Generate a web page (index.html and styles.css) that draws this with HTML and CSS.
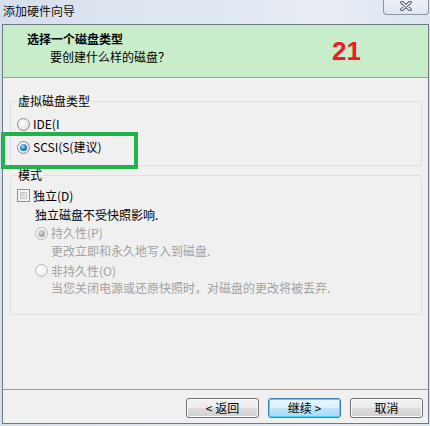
FILE: index.html
```html
<!DOCTYPE html>
<html lang="zh-CN">
<head>
<meta charset="utf-8">
<title>添加硬件向导</title>
<link rel="stylesheet" href="styles.css">
</head>
<body>
<div class="window">
  <div class="titlebar">
    <span class="title-text">添加硬件向导</span>
    <div class="close-btn">
      <svg width="12" height="10" viewBox="0 0 12 10">
        <path d="M2 1.5 L10 8.5 M10 1.5 L2 8.5" stroke="#4b5462" stroke-width="3.6" stroke-linecap="round" fill="none"/>
        <path d="M2 1.5 L10 8.5 M10 1.5 L2 8.5" stroke="#ffffff" stroke-width="1.6" stroke-linecap="round" fill="none"/>
      </svg>
    </div>
  </div>
  <div class="client">
    <div class="header">
      <div class="header-text">
        <div class="header-title">选择一个磁盘类型</div>
        <div class="header-sub">要创建什么样的磁盘？</div>
      </div>
      <div class="badge">21</div>
    </div>
    <div class="body">
      <fieldset class="group group-type">
        <legend class="legend">虚拟磁盘类型</legend>
        <div class="row"><span class="radio"></span><span class="label">IDE(I</span></div>
        <div class="row row-gap"><span class="radio checked"></span><span class="label">SCSI(S(建议)</span></div>
      </fieldset>
      <fieldset class="group group-mode">
        <legend class="legend">模式</legend>
        <div class="row row-check"><span class="checkbox"></span><span class="label">独立(D)</span></div>
        <div class="desc desc-main">独立磁盘不受快照影响.</div>
        <div class="row row-sub"><span class="radio disabled checked-disabled"></span><span class="label muted">持久性(P)</span></div>
        <div class="desc desc-sub muted">更改立即和永久地写入到磁盘.</div>
        <div class="row row-sub row-sub2"><span class="radio disabled"></span><span class="label muted">非持久性(O)</span></div>
        <div class="desc desc-sub muted">当您关闭电源或还原快照时，对磁盘的更改将被丢弃.</div>
      </fieldset>
    </div>
    <div class="footer">
      <button class="btn">&lt; 返回</button>
      <button class="btn btn-default">继续 &gt;</button>
      <button class="btn">取消</button>
    </div>
  </div>
  <div class="highlight"></div>
</div>
</body>
</html>
```
FILE: styles.css
```css
* { box-sizing: border-box; }
html, body {
  margin: 0;
  padding: 0;
  width: 430px;
  height: 426px;
  overflow: hidden;
}
body {
  font-family: "Noto Sans CJK SC", "Liberation Sans", sans-serif;
  font-size: 12px;
  color: #000;
  background: #dce5ef;
}
.window {
  position: relative;
  width: 430px;
  height: 426px;
  background: linear-gradient(to right, #d6e0ec 0%, #e2e9f2 55%, #e9eef5 75%, #dde5ef 100%);
}
.titlebar {
  height: 24px;
  display: flex;
  justify-content: space-between;
  align-items: flex-start;
}
.title-text {
  padding: 2px 0 0 3px;
  line-height: 18px;
  font-size: 12px;
  color: #111;
}
.close-btn {
  width: 46px;
  height: 16px;
  margin-top: -1px;
  margin-right: 1px;
  border: 1px solid #8c97a6;
  border-top: none;
  border-radius: 0 0 4px 4px;
  background: linear-gradient(#eef2f7, #dfe6ee);
  display: flex;
  align-items: center;
  justify-content: center;
  padding-bottom: 1px;
}
.client {
  margin-left: 2px;
  width: 427px;
  height: 400px;
  border: 1px solid #6f7884;
  background: #f0f0f0;
  display: flex;
  flex-direction: column;
}
.header {
  height: 53px;
  flex: none;
  background: #c7edcb;
  border-bottom: 1px solid #a0a0a0;
  display: flex;
}
.header-text {
  flex: 1;
  padding: 5px 0 0 24px;
  line-height: 17px;
}
.header-title {
  font-weight: bold;
}
.header-sub {
  padding-left: 23px;
  margin-top: 1px;
}
.badge {
  align-self: flex-start;
  margin-top: 13px;
  margin-right: 67px;
  font-family: "Liberation Sans", sans-serif;
  font-weight: bold;
  font-size: 26px;
  line-height: 26px;
  color: #ed1c24;
}
.body {
  flex: 1;
  padding: 15px 6px 0 7px;
}
.group {
  margin: 0;
  padding: 0 6px;
  border: 1px solid #d5dfe5;
  border-radius: 3px;
  min-width: 0;
}
.legend {
  padding: 0 1px;
  line-height: 16px;
}
.group-type {
  padding-top: 6px;
  padding-bottom: 9px;
}
.group-mode {
  margin-top: 1px;
  padding-top: 3px;
  padding-bottom: 17px;
}
.row {
  display: flex;
  align-items: center;
  height: 18px;
}
.row-gap { margin-top: 5px; }
.row-check { height: 19px; }
.label {
  margin-left: 3px;
  line-height: 16px;
}
.desc {
  line-height: 18px;
}
.desc-main {
  height: 19px;
  line-height: 19px;
  padding-left: 18px;
}
.row-sub {
  padding-left: 18px;
}
.row-sub .label { margin-left: 3px; }
.row-sub2 {
  margin-top: 2px;
  height: 17px;
}
.desc-sub {
  padding-left: 34px;
  height: 18px;
}
.muted { color: #a2a2a2; }
.radio {
  width: 13px;
  height: 13px;
  flex: none;
  border-radius: 50%;
  border: 1px solid #8d8f91;
  background: radial-gradient(circle at 40% 35%, #ffffff 0%, #f0f0f0 40%, #d4d4d4 100%);
  display: flex;
  align-items: center;
  justify-content: center;
}
.radio.checked::after {
  content: "";
  width: 7px;
  height: 7px;
  border-radius: 50%;
  background: radial-gradient(circle at 40% 35%, #a6e3fb 0%, #2b8ad0 45%, #0d3f73 100%);
}
.radio.disabled {
  border-color: #b8b8b8;
  background: radial-gradient(circle at 40% 35%, #ffffff 0%, #f4f4f4 50%, #e2e2e2 100%);
}
.radio.checked-disabled::after {
  content: "";
  width: 7px;
  height: 7px;
  border-radius: 50%;
  background: radial-gradient(circle at 40% 35%, #dcdcdc 0%, #a8a8a8 60%, #8f8f8f 100%);
}
.checkbox {
  width: 13px;
  height: 13px;
  flex: none;
  border: 1px solid #8e8f8f;
  background: #f4f4f4;
  padding: 2px;
  display: flex;
}
.checkbox::after {
  content: "";
  flex: 1;
  border: 1px solid #c8c8c8;
  background: linear-gradient(135deg, #cfcfcf, #f2f2f2);
}
.footer {
  flex: none;
  height: 34px;
  border-top: 1px solid #a0a0a0;
  padding: 8px 5px 0 0;
  display: flex;
  justify-content: flex-end;
  align-items: flex-start;
  gap: 9px;
}
.btn {
  width: 73px;
  height: 20px;
  padding: 0;
  font-family: "Noto Sans CJK SC", "Liberation Sans", sans-serif;
  font-size: 12px;
  line-height: 16px;
  color: #000;
  border: 1px solid #707070;
  border-radius: 3px;
  background: linear-gradient(#f3f3f3 0%, #ebebeb 48%, #dddddd 52%, #cfcfcf 100%);
  box-shadow: inset 0 0 0 1px #fcfcfc;
}
.btn-default {
  border-color: #3c7fb1;
  background: linear-gradient(#eaf6fd 0%, #d9f0fc 48%, #bee6fd 52%, #a7d9f5 100%);
  box-shadow: inset 0 0 0 1px #48d8fb;
}
.highlight {
  position: absolute;
  left: 1px;
  top: 132px;
  width: 137px;
  height: 37px;
  border: 4px solid #22b14c;
}
```
